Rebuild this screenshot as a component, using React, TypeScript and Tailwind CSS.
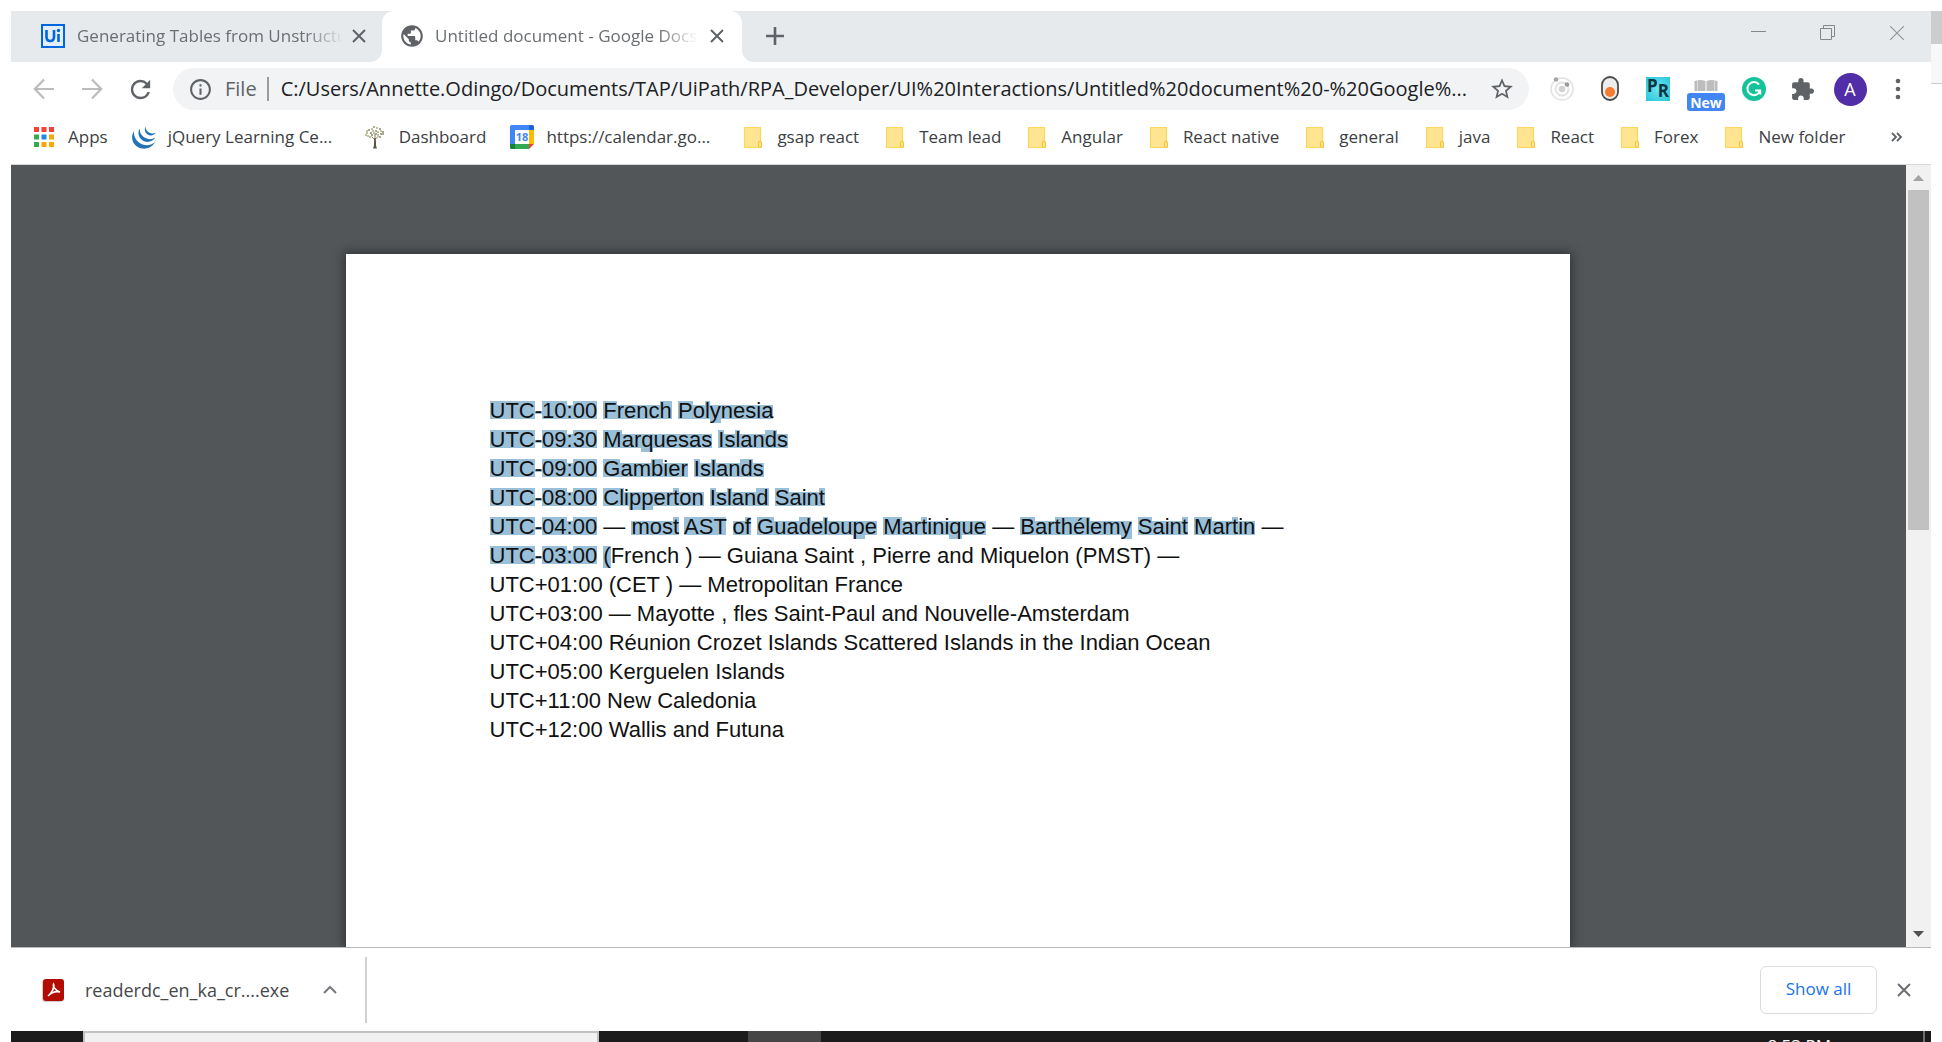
import { ReactNode } from "react";
import { MdPublic, MdExtension, MdRefresh, MdStarBorder, MdInfoOutline } from "react-icons/md";

const URL_TEXT =
  "C:/Users/Annette.Odingo/Documents/TAP/UiPath/RPA_Developer/UI%20Interactions/Untitled%20document%20-%20Google%...";

const ASC =
  "bg-[linear-gradient(to_bottom,transparent_3px,#9ac0d9_3px,#9ac0d9_21px,transparent_21px)]";
const LOW =
  "bg-[linear-gradient(to_bottom,transparent_7px,#9ac0d9_7px,#9ac0d9_21px,transparent_21px)]";
const DESC =
  "bg-[linear-gradient(to_bottom,transparent_7px,#9ac0d9_7px,#9ac0d9_25px,transparent_25px)]";
const TALL =
  "bg-[linear-gradient(to_bottom,transparent_3px,#9ac0d9_3px,#9ac0d9_25px,transparent_25px)]";
const DASH =
  "bg-[linear-gradient(to_bottom,transparent_13px,#9ac0d9_13px,#9ac0d9_16px,transparent_16px)]";

function markFor(ch: string) {
  if (ch === " " || ch === "—") return "";
  if (ch === "-") return DASH;
  if (ch === "(") return TALL;
  if ("ypqg".includes(ch)) return DESC;
  if ("aceimnorsuvwxz:".includes(ch)) return LOW;
  return ASC;
}

function Selected({ text }: { text: string }) {
  return (
    <>
      {Array.from(text).map((ch, i) => (
        <span key={i} className={markFor(ch)}>
          {ch}
        </span>
      ))}
    </>
  );
}

const lines: { selected?: string; plain?: string }[] = [
  { selected: "UTC-10:00 French Polynesia" },
  { selected: "UTC-09:30 Marquesas Islands" },
  { selected: "UTC-09:00 Gambier Islands" },
  { selected: "UTC-08:00 Clipperton Island Saint" },
  { selected: "UTC-04:00 — most AST of Guadeloupe Martinique — Barthélemy Saint Martin —" },
  { selected: "UTC-03:00 (", plain: "French ) — Guiana Saint , Pierre and Miquelon (PMST) —" },
  { plain: "UTC+01:00 (CET ) — Metropolitan France" },
  { plain: "UTC+03:00 — Mayotte , fles Saint-Paul and Nouvelle-Amsterdam" },
  { plain: "UTC+04:00 Réunion Crozet Islands Scattered Islands in the Indian Ocean" },
  { plain: "UTC+05:00 Kerguelen Islands" },
  { plain: "UTC+11:00 New Caledonia" },
  { plain: "UTC+12:00 Wallis and Futuna" },
];

function Cross({ size, stroke, width }: { size: number; stroke: string; width: number }) {
  return (
    <svg width={size} height={size} viewBox="0 0 14 14" fill="none" stroke={stroke} strokeWidth={width}>
      <path d="M1 1 13 13M13 1 1 13" />
    </svg>
  );
}

function FolderIcon() {
  return (
    <svg width="24" height="24" viewBox="0 0 24 24">
      <path d="M3 2h17v15h1v6H3z" fill="#ffe591" />
      <path d="M3.500 2.500h16v14M3.500 2v20.500h13.500" fill="none" stroke="#fbd75b" strokeWidth="1.200" />
      <rect x="17.500" y="16.500" width="3" height="6" rx="1.200" fill="#ffe591" stroke="#efc63c" strokeWidth="1.200" />
    </svg>
  );
}

function AppsIcon() {
  const colors = ["#f44336", "#f44336", "#f44336", "#34a853", "#1e88e5", "#fba70a", "#34a853", "#fba70a", "#fba70a"];
  return (
    <svg width="24" height="24" viewBox="0 0 24 24">
      {colors.map((c, i) => (
        <rect key={i} x={2 + (i % 3) * 7.5} y={2 + Math.floor(i / 3) * 7.5} width="5" height="5" fill={c} />
      ))}
    </svg>
  );
}

function JQueryIcon() {
  return (
    <svg width="24" height="24" viewBox="0 0 24 24" fill="#2273b5">
      <path d="M2 6C-1.500 12 0 18 5 21.500c6 4 14.500 2.500 18-4.500-4.500 3.800-10 4-14.500 1.500C4 16 1.500 11.500 2 6z" />
      <path d="M7.800 3.500c-2.500 4-1.300 9 2.500 11.700 4.300 3 10 2 13-2.700-3.500 2.200-7 2.200-10.300.3-3.500-2-5.500-5.300-5.200-9.300z" />
      <path d="M13.500 1.500c-1.400 2.800-.5 6 1.800 7.700 2.700 2 6.300 1.500 8.400-1.400-2.300 1.200-4.500 1-6.600-.2-2.200-1.300-3.600-3.400-3.600-6.100z" />
    </svg>
  );
}

function TreeIcon() {
  const leaves = [
    [4, 8], [6, 5], [9, 4], [11, 2], [14, 3], [17, 4], [18, 6], [20, 9], [5, 11], [8, 8], [10, 6], [13, 6],
    [15, 7], [18, 9], [7, 12], [9, 10], [15, 10], [17, 12], [11, 8], [13, 9], [4, 6], [20, 7], [3, 10],
  ];
  return (
    <svg width="24" height="24" viewBox="0 0 24 24">
      {leaves.map(([x, y], i) => (
        <circle key={i} cx={x} cy={y} r=".9" fill={i % 2 ? "#7d8156" : "#a0a47c"} />
      ))}
      <path d="M12 15 8.500 11.500M12.500 14l3-3M12 13V9" stroke="#7a745c" strokeWidth=".9" fill="none" />
      <path d="M11.200 13h1.600l.3 8 .9 2.500h-4l.9-2.500z" fill="#5b5340" />
    </svg>
  );
}

function CalendarIcon() {
  return (
    <svg width="24" height="24" viewBox="0 0 24 24">
      <path d="M0 1.500Q0 0 1.500 0H19v5H5v14H0z" fill="#4285f4" />
      <path d="M19 0h3.500Q24 0 24 1.500V5h-5z" fill="#1967d2" />
      <path d="M19 5h5v14h-5z" fill="#fbbc04" />
      <path d="M5 19h14v5H5z" fill="#34a853" />
      <path d="M0 19h5v5H1.500Q0 24 0 22.500z" fill="#188038" />
      <path d="M19 19h5l-5 5z" fill="#ea4335" />
      <path d="M5 5h14v14H5z" fill="#fff" />
      <text x="12" y="16" textAnchor="middle" fontSize="11" fontWeight="700" fontFamily="Open Sans, sans-serif" fill="#4285f4">
        18
      </text>
    </svg>
  );
}

const bookmarks: { label: string; icon: ReactNode; wide?: boolean }[] = [
  { label: "Apps", icon: <AppsIcon /> },
  { label: "jQuery Learning Ce...", icon: <JQueryIcon />, wide: true },
  { label: "Dashboard", icon: <TreeIcon /> },
  { label: "https://calendar.go...", icon: <CalendarIcon />, wide: true },
  ...["gsap react", "Team lead", "Angular", "React native", "general", "java", "React", "Forex", "New folder"].map(
    (label) => ({ label, icon: <FolderIcon /> }),
  ),
];

function TabStrip() {
  return (
    <div className="flex h-[51px] shrink-0 text-[17px] text-[#6b6e72]">
      <div className="flex w-[371px] items-center rounded-br-xl bg-[#e6eaed] pb-0.5 pl-[30px] pr-4">
        <div className="flex h-6 w-6 shrink-0 items-center justify-center border-2 border-[#0067df] bg-[#e4eefb]">
          <svg width="16" height="16" viewBox="0 0 16 16" fill="none" stroke="#0067df" strokeWidth="2.600">
            <path d="M1.500 2v7q0 4 3.700 4T9 9V2M13.500 6v8" />
            <circle cx="13.500" cy="2.500" r="1.700" fill="#0067df" stroke="none" />
          </svg>
        </div>
        <div className="ml-3 min-w-0 flex-1 overflow-hidden whitespace-nowrap [mask-image:linear-gradient(to_right,black_85%,transparent)]">
          Generating Tables from Unstructu
        </div>
        <button aria-label="Close tab" className="ml-2">
          <Cross size={14} stroke="#5f6368" width={2} />
        </button>
      </div>
      <div className="w-[360px] bg-[#e6eaed]">
        <div className="flex h-full items-center rounded-t-xl bg-white pb-0.5 pl-[17px] pr-[18px]">
          <MdPublic className="shrink-0 text-[#5f6368]" size={26} />
          <div className="ml-[10px] min-w-0 flex-1 overflow-hidden whitespace-nowrap [mask-image:linear-gradient(to_right,black_85%,transparent)]">
            Untitled document - Google Docs
          </div>
          <button aria-label="Close tab" className="ml-3">
            <Cross size={14} stroke="#5f6368" width={2} />
          </button>
        </div>
      </div>
      <div className="flex flex-1 items-center justify-between rounded-bl-xl bg-[#e6eaed] pb-0.5 pl-6 pr-[26px]">
        <button aria-label="New tab">
          <svg width="18" height="18" viewBox="0 0 18 18" stroke="#5f6368" strokeWidth="2.600">
            <path d="M9 0v18M0 9h18" />
          </svg>
        </button>
        <div className="flex gap-[53px] pb-1.5">
          <button aria-label="Minimize">
            <svg width="16" height="16" viewBox="0 0 16 16" stroke="#868686">
              <path d="M0 6.500h15" />
            </svg>
          </button>
          <button aria-label="Restore">
            <svg width="16" height="16" viewBox="0 0 16 16" stroke="#868686" fill="none">
              <path d="M.5 3.500h11v11H.5zM3.500 3.500v-3h11v11h-3" />
            </svg>
          </button>
          <button aria-label="Close">
            <Cross size={16} stroke="#949494" width={1} />
          </button>
        </div>
      </div>
    </div>
  );
}

function Slot({ label, children }: { label: string; children: ReactNode }) {
  return (
    <button aria-label={label} className="flex h-12 w-12 shrink-0 items-center justify-center">
      {children}
    </button>
  );
}

function Toolbar() {
  return (
    <div className="flex h-[54px] shrink-0 items-center pl-[9px] pr-[9px]">
      <Slot label="Back">
        <svg width="22" height="22" viewBox="0 0 22 22" fill="none" stroke="#babcbe" strokeWidth="2.200">
          <path d="M21 11H2M11 1.500 1.800 11l9.200 9.500" />
        </svg>
      </Slot>
      <Slot label="Forward">
        <svg width="22" height="22" viewBox="0 0 22 22" fill="none" stroke="#babcbe" strokeWidth="2.200">
          <path d="M1 11h19M11 1.500 20.200 11 11 20.500" />
        </svg>
      </Slot>
      <Slot label="Reload">
        <MdRefresh size={29} className="text-[#5f6368]" />
      </Slot>
      <div className="ml-[9px] flex h-[42px] min-w-0 flex-1 items-center rounded-full bg-[#f1f3f4] pl-[15px] pr-[14px] text-[20px]">
        <MdInfoOutline size={25} className="shrink-0 text-[#5f6368]" />
        <label htmlFor="address" className="ml-3 text-[#5f6368]">
          File
        </label>
        <span className="ml-[10px] h-6 w-[2px] shrink-0 bg-[#9a9c9f]" />
        <input
          id="address"
          type="text"
          readOnly
          value={URL_TEXT}
          className="ml-3 min-w-0 flex-1 bg-transparent text-[#202124] outline-none"
        />
        <button aria-label="Bookmark this page">
          <MdStarBorder size={26} className="text-[#5f6368]" />
        </button>
      </div>
      <div className="ml-[9px] flex">
        <Slot label="Orbit extension">
          <svg width="24" height="24" viewBox="0 0 24 24" fill="none" stroke="#e2e2e2">
            <circle cx="12" cy="12" r="11" strokeWidth="1.500" />
            <circle cx="12" cy="12" r="6.500" strokeWidth="1.800" />
            <circle cx="12" cy="12" r="3.200" fill="#d2d2d2" stroke="none" />
            <circle cx="6" cy="2.500" r="2.300" fill="#a6a6a6" stroke="none" />
            <circle cx="17" cy="7.500" r="2.300" fill="#9a9a9a" stroke="none" />
          </svg>
        </Slot>
        <Slot label="Toggle extension">
          <svg width="18" height="26" viewBox="0 0 18 26">
            <rect x="1" y="1" width="16" height="23" rx="8" fill="#ececec" stroke="#4a4a4a" strokeWidth="1.800" />
            <circle cx="9" cy="16" r="5" fill="#f47b30" />
          </svg>
        </Slot>
        <Slot label="PR extension">
          <span className="flex h-6 w-6 justify-center bg-[radial-gradient(#6ee4f2,#26c6da)] text-[17px] font-bold leading-[18px] text-[#0c3540]">
            <span>P</span>
            <span className="pt-[5px]">R</span>
          </span>
        </Slot>
        <Slot label="Reader extension, new">
          <span className="flex flex-col items-center pt-3">
            <svg width="24" height="14" viewBox="0 0 24 14" fill="#bdbdbd">
              <path d="M1 2q5-2 10.500 0v10H1zM12.500 2q5-2 10.500 0v10H12.500z" />
              <path d="M.5 2v10M3.500 1v11M20.500 1v11M23.500 2v10" stroke="#dcdcdc" />
            </svg>
            <span className="flex h-[18px] items-center rounded-[3px] bg-[#4285f4] px-[3px] text-[14px] font-bold text-white">
              New
            </span>
          </span>
        </Slot>
        <Slot label="Writing assistant">
          <svg width="24" height="24" viewBox="0 0 24 24">
            <circle cx="12" cy="12" r="12" fill="#15c39a" />
            <path d="M17 7.500A6.500 6.500 0 1 0 18 14M13 13.500h5.200v4" fill="none" stroke="#fff" strokeWidth="2" />
          </svg>
        </Slot>
        <Slot label="Extensions">
          <MdExtension size={25} className="text-[#5f6368]" />
        </Slot>
        <Slot label="Profile">
          <span className="flex h-[33px] w-[33px] items-center justify-center rounded-full bg-[#512da8] text-[18px] text-white">
            A
          </span>
        </Slot>
        <Slot label="Menu">
          <svg width="6" height="22" viewBox="0 0 6 22" fill="#5f6368">
            <circle cx="3" cy="3" r="2.300" />
            <circle cx="3" cy="11" r="2.300" />
            <circle cx="3" cy="19" r="2.300" />
          </svg>
        </Slot>
      </div>
    </div>
  );
}

function BookmarksBar() {
  return (
    <div className="flex h-[49px] shrink-0 items-center justify-between border-b border-[#d5d8db] pb-1.5 pl-[21px] pr-[28px] text-[17px] leading-6 text-[#3c4043]">
      <nav className="flex gap-6">
        {bookmarks.map((b) => (
          <a
            key={b.label}
            href="#"
            className={b.wide ? "flex w-[207px] items-center gap-3 whitespace-nowrap" : "flex items-center gap-3 whitespace-nowrap"}
          >
            {b.icon}
            {b.label}
          </a>
        ))}
      </nav>
      <button aria-label="More bookmarks">
        <svg width="12" height="12" viewBox="0 0 12 12" fill="none" stroke="#5f6368" strokeWidth="1.800">
          <path d="M1 2l4 4-4 4M6 2l4 4-4 4" />
        </svg>
      </button>
    </div>
  );
}

function Viewer() {
  return (
    <div className="flex min-h-0 flex-1">
      <main className="min-w-0 flex-1 overflow-hidden bg-[#525659] pr-[2px] pt-[89px]">
        <article className="mx-auto h-full w-full max-w-[1224px] bg-white pl-[144px] pt-[142px] font-['Liberation_Sans',sans-serif] text-[22px] leading-[29px] text-[#111] shadow-[0_0_10px_2px_rgba(0,0,0,0.4)]">
          {lines.map((l, i) => (
            <p key={i} className="whitespace-nowrap">
              {l.selected && <Selected text={l.selected} />}
              {l.plain}
            </p>
          ))}
        </article>
      </main>
      <div className="flex w-[25px] shrink-0 flex-col items-center bg-[#f1f1f1]">
        <svg className="shrink-0" width="25" height="25" viewBox="0 0 25 25">
          <path d="M7 16l5.500-6 5.500 6z" fill="#a3a3a3" />
        </svg>
        <div className="h-[340px] w-[21px] bg-[#c1c1c1]" />
        <svg className="mt-auto shrink-0" width="25" height="25" viewBox="0 0 25 25">
          <path d="M7 9l5.500 6L18 9z" fill="#505050" />
        </svg>
      </div>
    </div>
  );
}

function DownloadBar() {
  return (
    <div className="flex h-[84px] shrink-0 items-center border-t border-[#b8babc] pl-8 pr-5">
      <div className="flex h-[22px] w-[21px] items-center justify-center rounded-[3px] bg-[#b30b00] shadow-[-1px_1px_1px_#c9c9c9]">
        <svg width="16" height="16" viewBox="0 0 16 16" fill="none" stroke="#fff" strokeWidth="1.600">
          <path d="M7.500 2c-1 2 1 6 6.500 8-4-1-8 0-12 4C6 10.500 9 5 7.500 2z" />
        </svg>
      </div>
      <span className="ml-[21px] w-[216px] pt-0.5 text-[18px] text-[#45484b]">readerdc_en_ka_cr....exe</span>
      <button aria-label="Download options" className="ml-[22px]">
        <svg width="14" height="9" viewBox="0 0 14 9" fill="none" stroke="#76797d" strokeWidth="2">
          <path d="M1 8l6-6 6 6" />
        </svg>
      </button>
      <span className="ml-7 h-[66px] w-[2px] bg-[#cfd0d2]" />
      <button className="ml-auto h-12 w-[117px] rounded-md border border-[#dadce0] pb-0.5 text-[17px] font-medium text-[#1a73e8]">
        Show all
      </button>
      <button aria-label="Close downloads" className="ml-5">
        <Cross size={14} stroke="#6b6e72" width={2} />
      </button>
    </div>
  );
}

function Taskbar() {
  return (
    <div className="flex h-[11px] shrink-0 overflow-hidden bg-[#1b1b1b]">
      <div className="ml-[72px] h-10 w-[516px] border-2 border-[#c1c1c1] bg-[#f1f1f1]" />
      <div className="ml-[149px] h-10 w-[73px] bg-[#464646]" />
      <span className="ml-auto mt-[7px] text-[17px] leading-[16px] text-white">8:53 PM</span>
      <div className="ml-[92px] mr-[6px] h-10 w-[2px] bg-[#6e6e6e]" />
    </div>
  );
}

export default function App() {
  return (
    <div className="flex h-screen overflow-hidden bg-white pl-[11px] pt-[11px] font-['Open_Sans',sans-serif]">
      <div className="flex min-w-0 flex-1 flex-col">
        <TabStrip />
        <Toolbar />
        <BookmarksBar />
        <Viewer />
        <DownloadBar />
        <Taskbar />
      </div>
      <div className="w-[11px] shrink-0">
        <div className="h-[33px] bg-[#cdcdcd]" />
        <div className="h-10 border-b border-[#cccccc] bg-[#f8f8f8]" />
      </div>
    </div>
  );
}
